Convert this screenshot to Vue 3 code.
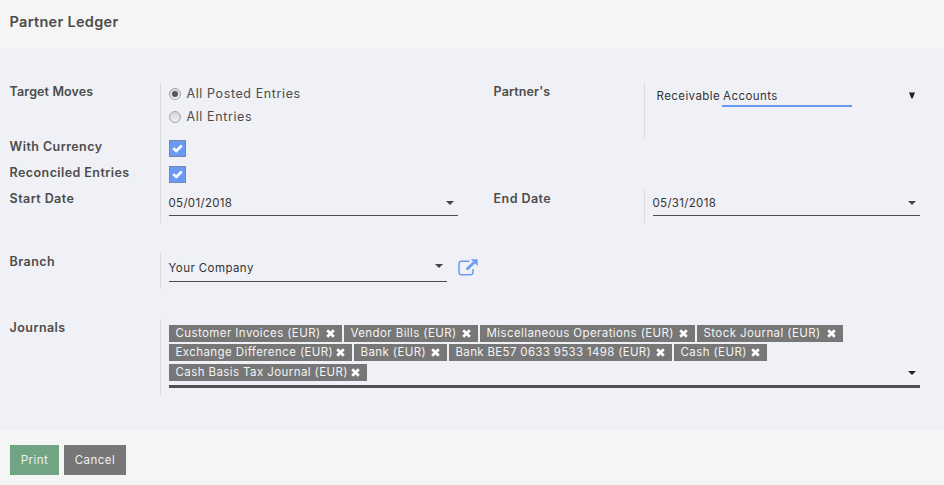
<script setup>
const journalRows = [
  [
    { name: 'Customer Invoices (EUR)', width: 173 },
    { name: 'Vendor Bills (EUR)', width: 134 },
    { name: 'Miscellaneous Operations (EUR)', width: 215 },
    { name: 'Stock Journal (EUR)', width: 146 },
  ],
  [
    { name: 'Exchange Difference (EUR)', width: 183 },
    { name: 'Bank (EUR)', width: 93 },
    { name: 'Bank BE57 0633 9533 1498 (EUR)', width: 223, numeric: true },
    { name: 'Cash (EUR)', width: 93 },
  ],
  [{ name: 'Cash Basis Tax Journal (EUR)', width: 198 }],
]
</script>

<template>
  <div class="dialog">
    <header class="header"><h1>Partner Ledger</h1></header>

    <main class="body">
      <div class="row moves">
        <div class="label tight">Target Moves</div>
        <div class="field radios">
          <div class="radio"><span class="dot on"></span><span class="radio-text">All Posted Entries</span></div>
          <div class="radio"><span class="dot"></span><span class="radio-text">All Entries</span></div>
        </div>
        <div class="label tight">Partner's</div>
        <div class="field partner">
          <span class="partner-text">Receivable <span class="focus">Accounts</span></span>
          <svg class="select-arrow" width="8" height="7" viewBox="0 0 8 7"><path d="M1 0.5h6L4.6 6.5H3.4z" fill="#222" /></svg>
        </div>
      </div>
      <div class="row check-row" v-for="name in ['With Currency', 'Reconciled Entries']" :key="name">
        <div class="label">{{ name }}</div>
        <div class="field">
          <span class="checkbox">
            <svg width="11" height="9" viewBox="0 0 11 9"><path d="M1.2 4.1L4.2 7L9.8 1.5" fill="none" stroke="#fff" stroke-width="2.6" /></svg>
          </span>
        </div>
      </div>
      <div class="row dates">
        <div class="label">Start Date</div>
        <div class="field"><div class="input date"><span>05/01/2018</span><i class="caret"></i></div></div>
        <div class="label">End Date</div>
        <div class="field"><div class="input date"><span>05/31/2018</span><i class="caret"></i></div></div>
      </div>

      <div class="row branch">
        <div class="label">Branch</div>
        <div class="field branch-field">
          <div class="input company"><span>Your Company</span><i class="caret"></i></div>
          <svg class="external" width="20" height="17" viewBox="0 0 20 17">
            <path d="M11.5 2.2H3.4Q1 2.2 1 4.6V13.3Q1 15.7 3.4 15.7H12.6Q15 15.7 15 13.3V10" fill="none" stroke="#6c9bf3" stroke-width="1.5" />
            <path d="M8.6 10.6L16 3.6" stroke="#6c9bf3" stroke-width="2.7" />
            <path d="M12.8 0.3H19.6V7z" fill="#6c9bf3" />
          </svg>
        </div>
      </div>

      <div class="row journals">
        <div class="label">Journals</div>
        <div class="field">
          <div class="tags">
            <div class="tag-row" v-for="(row, i) in journalRows" :key="i">
              <span class="tag" :class="{ numeric: tag.numeric }" v-for="tag in row" :key="tag.name" :style="{ width: tag.width + 'px' }">
                <span>{{ tag.name }}</span>
                <svg width="9" height="9" viewBox="0 0 9 9"><path d="M1.2 1.2L7.8 7.8M7.8 1.2L1.2 7.8" stroke="#fff" stroke-width="2.7" /></svg>
              </span>
              <i v-if="i === 2" class="caret dark"></i>
            </div>
          </div>
        </div>
      </div>
    </main>

    <footer class="footer">
      <button class="btn print">Print</button>
      <button class="btn cancel">Cancel</button>
    </footer>
  </div>
</template>

<style>
body { background: #f5f5f5; }
</style>

<style scoped>
.dialog, .dialog * { box-sizing: border-box; }
.dialog {
  width: 944px;
  height: 485px;
  background: #f5f5f5;
  color: #4c4c4c;
  font-family: "Inter", sans-serif;
  font-size: 12.5px;
  overflow: hidden;
  white-space: nowrap;
}
.header { height: 49px; padding: 11px 10px 0 9.5px; }
h1 { margin: 0; font-size: 14.5px; line-height: 22px; font-weight: 600; letter-spacing: 0.3px; }
.body { height: 381px; padding: 34px 24px 0 10px; background: #f0f1f6; }
.row { display: grid; grid-template-columns: 150px 334px 150px 276px; }
.label { line-height: 17px; font-weight: 600; letter-spacing: 0.42px; margin-left: -0.4px; }
.label.tight { letter-spacing: 0.12px; }
.field { border-left: 1px solid #dadbdb; padding-left: 8px; }
.moves { height: 55px; }
.radios { padding-top: 1px; }
.radio { display: flex; align-items: center; gap: 5.5px; height: 20px; margin-bottom: 3px; letter-spacing: 0.6px; }
.radio-text { padding-bottom: 2px; }
.dot {
  width: 12px; height: 12px; border: 1px solid #a5a5a5; border-radius: 50%;
  background: linear-gradient(#d6d6d6, #eee);
  display: flex; align-items: center; justify-content: center;
}
.dot.on::after { content: ""; width: 6px; height: 6px; border-radius: 50%; background: #555; }
.partner {
  display: flex; justify-content: space-between; align-items: flex-start;
  padding: 5px 4px 0 11.5px; color: #333; font-size: 11.5px; line-height: 17px;
}
.partner-text { display: flex; gap: 2px; }
.focus { width: 130px; padding-left: 1px; border-bottom: 2px solid #6598f0; }
.partner-text, .input { letter-spacing: 0.42px; }
.select-arrow { margin: 4px 0 0; }
.check-row { height: 26px; }
.check-row .field { padding-top: 2px; }
.checkbox {
  display: flex; align-items: center; justify-content: center;
  width: 17px; height: 17px; background: #6a9af1; border: 1px solid #7588a9;
}
.dates { height: 33px; }
.input {
  display: flex; justify-content: space-between; align-items: center;
  border-bottom: 1px solid #4c4c4c; color: #333; font-size: 11.5px; padding-right: 4px;
}
.input span { margin-left: -0.5px; }
.date { height: 26px; letter-spacing: 0.32px; }
.dates .field:nth-child(2) .input { width: 289px; }
.dates .field:nth-child(4) .input { width: 267px; }
.caret { width: 0; height: 0; border: 4px solid transparent; border-top-color: #444; border-bottom: 0; }
.branch { height: 36px; margin-top: 30px; }
.branch-field { display: flex; align-items: flex-start; gap: 11px; }
.company { width: 278px; height: 29px; }
.company span { padding-top: 2px; }
.company .caret { margin-bottom: 3px; }
.external { margin-top: 6px; }
.journals { grid-template-columns: 150px 760px; height: 76px; margin-top: 30px; }
.journals .field { padding-top: 6px; }
.tags { width: 751px; height: 63px; border-bottom: 3px solid #505055; }
.tag-row { display: flex; gap: 2px; height: 17px; margin-bottom: 2px; }
.tag-row:nth-child(3) { margin-top: 3px; }
.tag {
  display: flex; justify-content: space-between; align-items: center; height: 17px;
  padding: 0 7.5px 0 6.5px; background: #777; color: #f3f3f3; font-size: 11.5px; letter-spacing: 0.41px;
}
.tag span { line-height: 15px; }
.tag.numeric { letter-spacing: 0.33px; }
.caret.dark { margin: 7px 4px 0 auto; border-top-color: #222; }
.footer { display: flex; gap: 5px; padding: 15px 10px; }
.btn {
  height: 30px; padding: 0; border: 0; color: #f0f0f0; font-family: inherit;
  font-size: 11.5px; letter-spacing: 0.5px;
}
.print { width: 49px; background: #70a583; }
.cancel { width: 62px; background: #777; }
</style>
